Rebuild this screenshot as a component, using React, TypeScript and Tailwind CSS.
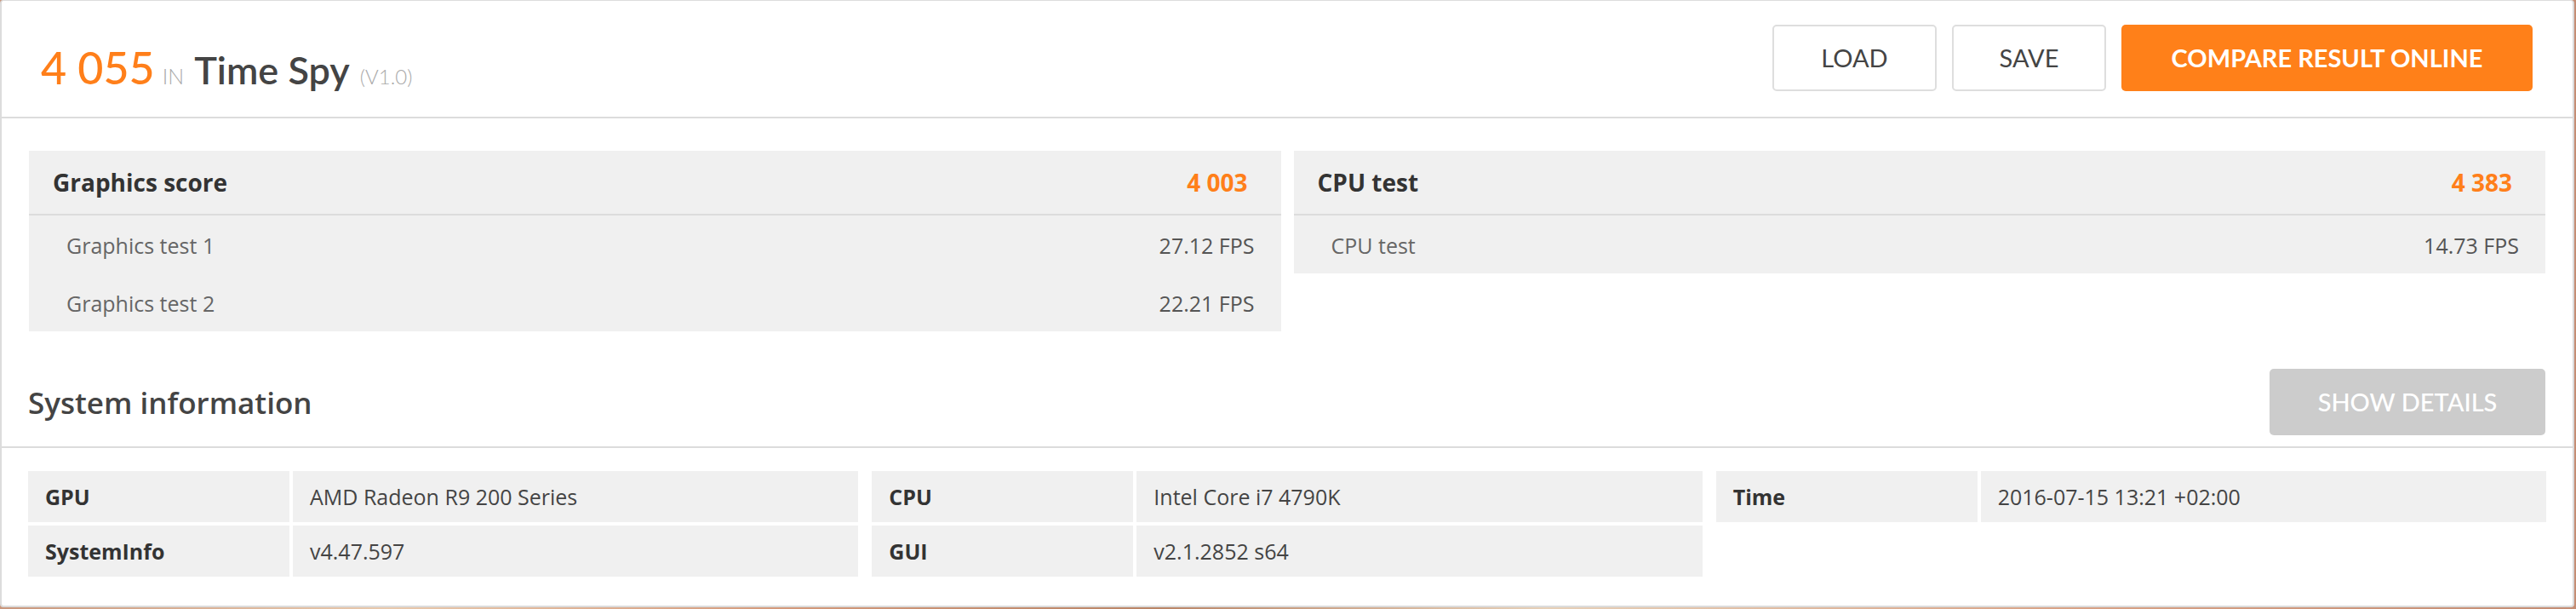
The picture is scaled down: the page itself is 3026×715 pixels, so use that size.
import React from "react";

const lato = "font-['Lato',sans-serif]";
const open = "font-['Open_Sans','Noto_Sans',sans-serif]";

function ScoreBox({
  title,
  score,
  rows,
}: {
  title: string;
  score: string;
  rows: { label: string; value: string }[];
}) {
  return (
    <div className="bg-[#f0f0f0]">
      <div className="flex h-[76px] items-center justify-between border-b-2 border-[#dcdcdc] pl-[28px] pr-[39px]">
        <span className={`${open} text-[28px] font-bold text-[#333]`}>{title}</span>
        <span className={`${open} text-[28px] font-bold text-[#ff7f1a]`}>{score}</span>
      </div>
      {rows.map((r) => (
        <div key={r.label} className="flex h-[68px] items-center justify-between pl-[44px] pr-[31px] pt-[4px]">
          <span className={`${open} text-[25px] text-[#666]`}>{r.label}</span>
          <span className={`${open} text-[25px] text-[#555]`}>{r.value}</span>
        </div>
      ))}
    </div>
  );
}

function InfoGroup({ rows }: { rows: { label: string; value: string }[] }) {
  return (
    <div className="flex flex-col gap-[4px]">
      {rows.map((r) => (
        <div key={r.label} className="grid h-[60px] grid-cols-[307px_1fr] gap-[4px]">
          <div className={`${open} flex items-center bg-[#f0f0f0] pl-[20px] pt-[2px] text-[25px] font-bold text-[#333]`}>
            {r.label}
          </div>
          <div className={`${open} flex items-center bg-[#f0f0f0] pl-[20px] pt-[2px] text-[25px] text-[#444]`}>
            {r.value}
          </div>
        </div>
      ))}
    </div>
  );
}

export default function App() {
  return (
    <div className="h-[715px] w-[3026px] overflow-hidden bg-[linear-gradient(90deg,#c9977d_0%,#e8c9ad_15%,#d49a7c_30%,#b98466_45%,#e6d0b8_60%,#d8a286_80%,#c48d74_100%)]">
      <div className="h-[713px] w-[3024px] rounded-[4px] border-x-2 border-t border-b-2 border-[#dcdcdc] bg-white">
        {/* Header */}
        <div className="flex h-[136px] items-start justify-between pl-[46px] pr-[47px]">
          <div className="flex items-baseline pt-[52px]">
            <span className={`${lato} text-[52px] font-medium leading-none text-[#ff7f1a]`}>4 055</span>
            <span className={`${lato} ml-[9px] text-[25px] font-light leading-none text-[#aaa]`}>IN</span>
            <span className={`${lato} ml-[12px] text-[45px] font-semibold leading-none text-[#444]`}>Time Spy</span>
            <span className={`${lato} ml-[12px] text-[24px] font-light leading-none text-[#aaa]`}>(V1.0)</span>
          </div>
          <div className="flex gap-[18px] pt-[28px]">
            <button className={`${lato} h-[78px] w-[193px] rounded-[5px] border-2 border-[#dedede] bg-white text-[29px] text-[#444]`}>
              LOAD
            </button>
            <button className={`${lato} h-[78px] w-[181px] rounded-[5px] border-2 border-[#dedede] bg-white text-[29px] text-[#444]`}>
              SAVE
            </button>
            <button className={`${lato} h-[78px] w-[483px] rounded-[5px] bg-[#ff8019] text-[29px] font-bold text-white`}>
              COMPARE RESULT ONLINE
            </button>
          </div>
        </div>
        <div className="h-[2px] bg-[#dcdcdc]" />

        {/* Scores */}
        <div className="grid grid-cols-2 items-start gap-[15px] px-[32px] pt-[38px]">
          <ScoreBox
            title="Graphics score"
            score="4 003"
            rows={[
              { label: "Graphics test 1", value: "27.12 FPS" },
              { label: "Graphics test 2", value: "22.21 FPS" },
            ]}
          />
          <ScoreBox title="CPU test" score="4 383" rows={[{ label: "CPU test", value: "14.73 FPS" }]} />
        </div>

        {/* System information header */}
        <div className="flex items-center justify-between pb-[13px] pl-[31px] pr-[32px] pt-[44px]">
          <span className={`${open} pt-[3px] text-[35px] font-semibold text-[#444]`}>System information</span>
          <button className={`${lato} h-[78px] w-[324px] rounded-[5px] bg-[#cccccc] text-[29px] font-medium text-white`}>
            SHOW DETAILS
          </button>
        </div>
        <div className="h-[2px] bg-[#dcdcdc]" />

        {/* System information table */}
        <div className="grid grid-cols-3 items-start gap-[16px] px-[31px] pt-[27px]">
          <InfoGroup
            rows={[
              { label: "GPU", value: "AMD Radeon R9 200 Series" },
              { label: "SystemInfo", value: "v4.47.597" },
            ]}
          />
          <InfoGroup
            rows={[
              { label: "CPU", value: "Intel Core i7 4790K" },
              { label: "GUI", value: "v2.1.2852 s64" },
            ]}
          />
          <InfoGroup rows={[{ label: "Time", value: "2016-07-15 13:21 +02:00" }]} />
        </div>
      </div>
    </div>
  );
}
